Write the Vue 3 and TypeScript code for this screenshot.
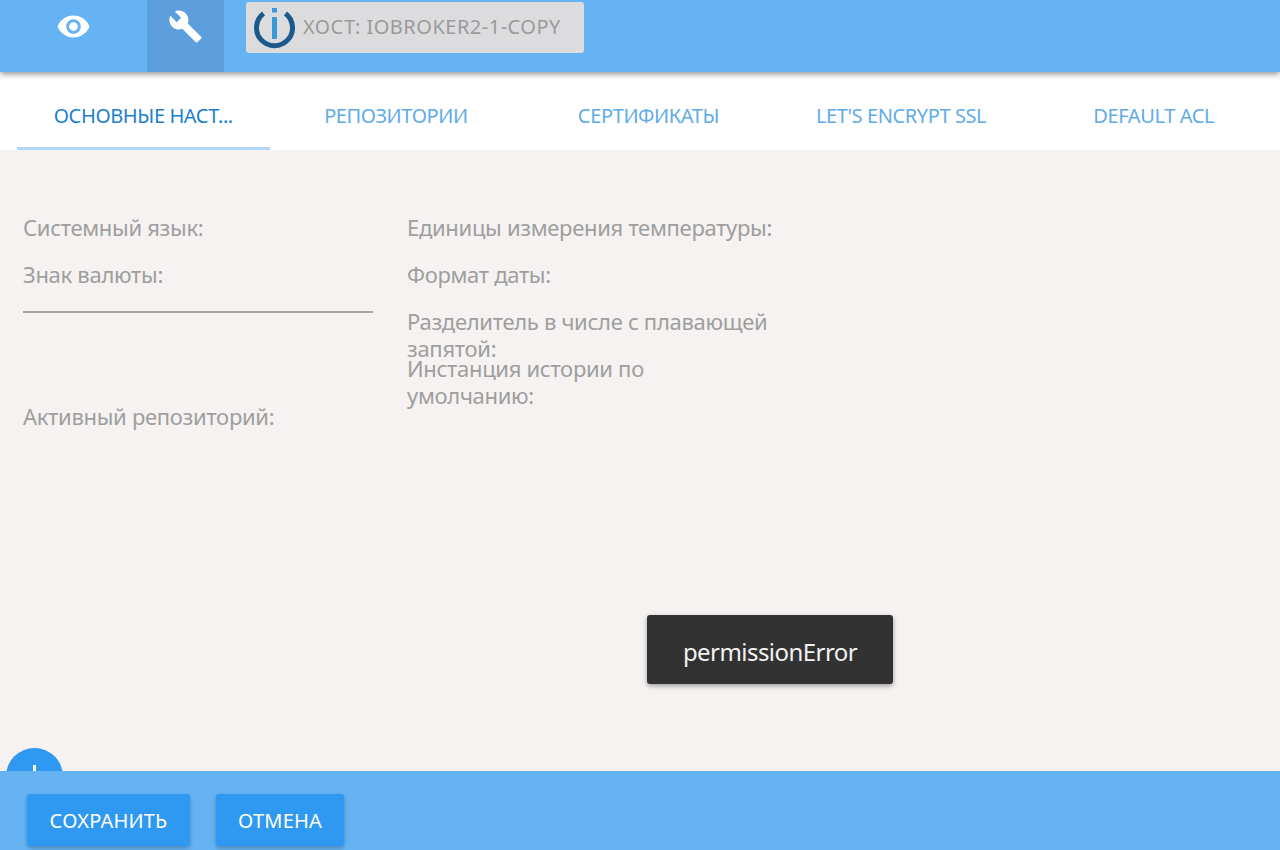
<script setup lang="ts">
const tabs: string[] = ['ОСНОВНЫЕ НАСТ...', 'РЕПОЗИТОРИИ', 'СЕРТИФИКАТЫ', "LET'S ENCRYPT SSL", 'DEFAULT ACL']
</script>

<template>
  <div class="page">
    <header class="topbar">
      <button class="nav nav-eye" type="button" aria-label="view">
        <svg width="35" height="35" viewBox="0 0 24 24" fill="#fff"><path d="M12 4.5C7 4.5 2.73 7.61 1 12c1.73 4.39 6 7.5 11 7.5s9.27-3.11 11-7.5c-1.73-4.39-6-7.5-11-7.5zM12 17c-2.76 0-5-2.24-5-5s2.24-5 5-5 5 2.24 5 5-2.24 5-5 5zm0-8c-1.66 0-3 1.34-3 3s1.34 3 3 3 3-1.34 3-3-1.34-3-3-3z"/></svg>
      </button>
      <button class="nav nav-tool" type="button" aria-label="settings">
        <svg width="35" height="35" viewBox="0 0 24 24" fill="#fff"><path d="M22.7 19l-9.1-9.1c.9-2.3.4-5-1.5-6.9-2-2-5-2.4-7.4-1.3L9 6 6 9 1.6 4.7C.4 7.1.9 10.1 2.9 12.1c1.9 1.9 4.6 2.4 6.9 1.5l9.1 9.1c.4.4 1 .4 1.4 0l2.3-2.3c.5-.4.5-1.1.1-1.4z"/></svg>
      </button>
      <div class="host">
        <svg class="logo" width="42" height="42" viewBox="0 0 42 42">
          <path d="M10.5 6.5A18 18 0 1 0 32.5 6.5" fill="none" stroke="#1d5a8c" stroke-width="5"/>
          <rect x="19" y="10" width="5" height="22" fill="#3a9ad9"/>
          <rect x="19" y="1" width="5" height="4.5" fill="#3a9ad9"/>
        </svg>
        <span class="host-text">ХОСТ: IOBROKER2-1-COPY</span>
      </div>
    </header>

    <nav class="tabs">
      <div v-for="(tab, i) in tabs" :key="tab" class="tab" :class="{ active: i === 0 }">{{ tab }}</div>
    </nav>

    <main class="content">
      <div class="col col-left">
        <div class="row">Системный язык:</div>
        <div class="row">Знак валюты:</div>
        <div class="rule"></div>
        <div class="row">Активный репозиторий:</div>
      </div>
      <div class="col col-right">
        <div class="row">Единицы измерения температуры:</div>
        <div class="row">Формат даты:</div>
        <div class="row multi">Разделитель в числе с плавающей запятой:</div>
        <div class="row multi short">Инстанция истории по умолчанию:</div>
      </div>
      <div class="toast">permissionError</div>
      <div class="fab"><span class="plus"></span></div>
    </main>

    <footer class="footer">
      <button class="btn btn-save" type="button">СОХРАНИТЬ</button>
      <button class="btn btn-cancel" type="button">ОТМЕНА</button>
    </footer>
  </div>
</template>

<style>
html, body { margin: 0; padding: 0; }
</style>

<style scoped>
.page {
  width: 1280px;
  height: 850px;
  display: flex;
  flex-direction: column;
  overflow: hidden;
  background: #f5f2f1;
  font-family: "Noto Sans", "Open Sans", sans-serif;
}
.topbar {
  height: 72px;
  flex: none;
  display: flex;
  align-items: flex-start;
  background: #66b3f3;
  box-shadow: 0 2px 6px rgba(0, 0, 0, 0.45);
  position: relative;
  z-index: 2;
}
.nav {
  height: 72px;
  padding: 9px 0 0;
  border: 0;
  background: transparent;
  display: flex;
  justify-content: center;
  align-items: flex-start;
}
.nav-eye { width: 147px; }
.nav-tool { width: 77px; background: #5d9fdc; }
.host {
  margin: 2px 0 0 22px;
  width: 338px;
  height: 51px;
  box-sizing: border-box;
  padding: 5px 0 0 7px;
  display: flex;
  align-items: flex-start;
  gap: 8px;
  background: #dcdcde;
  border-radius: 3px;
}
.host-text {
  font-size: 20px;
  line-height: 40px;
  letter-spacing: 0.5px;
  color: #9a9a9a;
  white-space: nowrap;
}
.tabs {
  flex: none;
  height: 78px;
  box-sizing: border-box;
  padding: 0 0 0 17px;
  display: flex;
  background: #fff;
}
.tab {
  width: 253px;
  height: 78px;
  box-sizing: border-box;
  padding-top: 17px;
  line-height: 54px;
  text-align: center;
  font-size: 20px;
  letter-spacing: -0.4px;
  color: #5fabe8;
  white-space: nowrap;
}
.tab.active {
  color: #1c80cf;
  border-bottom: 3px solid #b3d8f5;
}
.content {
  flex: 1;
  position: relative;
  display: flex;
  padding: 54px 0 0 23px;
  color: #9e9e9e;
  font-size: 22px;
  letter-spacing: -0.3px;
}
.col { display: flex; flex-direction: column; }
.col-left { width: 350px; margin-right: 34px; }
.col-right { width: 372px; }
.row {
  height: 47px;
  line-height: 47px;
  white-space: nowrap;
}
.row.multi {
  line-height: 27px;
  white-space: normal;
  padding-top: 10px;
  box-sizing: border-box;
}
.row.short { max-width: 300px; }
.rule {
  height: 2px;
  margin-top: 13px;
  margin-bottom: 80px;
  background: #aaa6a6;
}
.toast {
  position: absolute;
  left: 647px;
  top: 465px;
  width: 246px;
  height: 69px;
  line-height: 74px;
  text-align: center;
  font-size: 24px;
  letter-spacing: -0.55px;
  color: #f2f2f2;
  background: #323232;
  border-radius: 3px;
  box-shadow: 0 2px 5px rgba(0, 0, 0, 0.35);
}
.fab {
  position: absolute;
  left: 6px;
  top: 598px;
  width: 57px;
  height: 57px;
  border-radius: 50%;
  background: #2f98f0;
}
.plus {
  position: absolute;
  left: 27px;
  top: 17px;
  width: 3px;
  height: 24px;
  background: #fff;
}
.footer {
  flex: none;
  height: 79px;
  box-sizing: border-box;
  padding: 23px 0 0 27px;
  display: flex;
  align-items: flex-start;
  gap: 26px;
  background: #66b3f3;
  position: relative;
  z-index: 1;
}
.btn {
  height: 52px;
  border: 0;
  border-radius: 3px;
  padding: 0;
  background: #2f98f0;
  color: #fff;
  font-family: "Noto Sans", "Open Sans", sans-serif;
  font-size: 20px;
  letter-spacing: 0.2px;
  box-shadow: 0 2px 4px rgba(0, 0, 0, 0.25);
}
.btn-save { width: 163px; }
.btn-cancel { width: 128px; }
</style>
